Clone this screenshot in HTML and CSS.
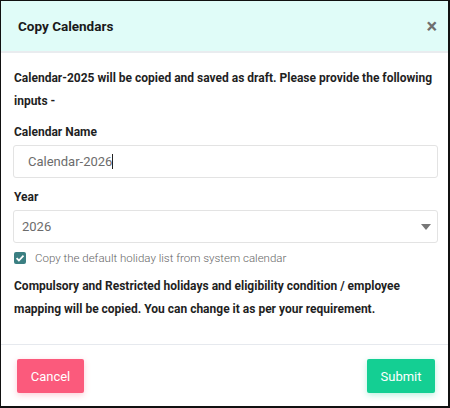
FILE: index.html
```html
<!DOCTYPE html>
<html>
<head>
<meta charset="utf-8">
<link rel="stylesheet" href="styles.css">
</head>
<body>
<div class="modal">
  <div class="modal-header">
    <h1 class="modal-title">Copy Calendars</h1>
    <span class="close">&times;</span>
  </div>
  <div class="modal-body">
    <p class="note">Calendar-2025 will be copied and saved as draft. Please provide the following inputs -</p>
    <label class="field-label">Calendar Name</label>
    <div class="input">Calendar-2026<span class="caret"></span></div>
    <label class="field-label">Year</label>
    <div class="select">
      <span>2026</span>
      <svg class="arrow" width="10" height="6" viewBox="0 0 10 6"><path d="M0 0h10L5 6z" fill="#777"/></svg>
    </div>
    <div class="check-row">
      <span class="checkbox"><svg width="12" height="12" viewBox="0 0 12 12"><path d="M2.6 6.2l2.3 2.3 4.6-4.8" fill="none" stroke="#fff" stroke-width="1.8"/></svg></span>
      <span class="check-text">Copy the default holiday list from system calendar</span>
    </div>
    <p class="note">Compulsory and Restricted holidays and eligibility condition / employee mapping will be copied. You can change it as per your requirement.</p>
  </div>
  <div class="modal-footer">
    <button class="btn btn-cancel">Cancel</button>
    <button class="btn btn-submit">Submit</button>
  </div>
</div>
</body>
</html>
```
FILE: styles.css
```css
html, body {
  margin: 0;
  padding: 0;
  background: #fff;
}
body {
  font-family: Roboto, "Liberation Sans", sans-serif;
  color: #212121;
}
.modal {
  width: 447px;
  height: 405px;
  border-top: 1px solid #111;
  border-left: 1px solid #111;
  border-right: 2px solid #111;
  border-bottom: 2px solid #111;
  display: flex;
  flex-direction: column;
  background: #fff;
}
.modal-header {
  height: 50px;
  flex-shrink: 0;
  background: #e0fcf8;
  border-bottom: 2px solid #e9ecef;
  display: flex;
  align-items: center;
  justify-content: space-between;
  padding: 0 11px 0 17px;
}
.modal-title {
  margin: 0;
  font-size: 13.5px;
  font-weight: 700;
  color: #1a1a1a;
}
.close {
  font-size: 20px;
  font-weight: 700;
  color: #6f6f6f;
  line-height: 1;
  margin-top: -1px;
}
.modal-body {
  flex: 1;
  padding: 14px 10px 0 12px;
}
.note {
  margin: 0 0 0 1px;
  font-size: 12px;
  font-weight: 700;
  line-height: 23px;
  color: #1f1f1f;
}
.field-label {
  display: block;
  font-size: 12px;
  line-height: 16px;
  font-weight: 700;
  margin-top: 11px;
  margin-bottom: 5px;
  margin-left: 1px;
  color: #1f1f1f;
}
.input, .select {
  height: 31px;
  border: 1px solid #e3e3e3;
  border-radius: 3px;
  display: flex;
  align-items: center;
  font-size: 13px;
  color: #6c6c6c;
}
.input {
  padding-left: 14px;
}
.caret {
  display: inline-block;
  width: 1px;
  height: 15px;
  background: #222;
}
.select {
  padding-left: 8px;
  padding-right: 6px;
  justify-content: space-between;
}
.arrow {
  display: block;
  margin-top: 1px;
}
.check-row {
  display: flex;
  align-items: center;
  height: 16px;
  margin-top: 7px;
  margin-bottom: 9px;
  margin-left: 1px;
}
.checkbox {
  width: 12px;
  height: 12px;
  border-radius: 2px;
  background: #3b7f82;
  display: inline-flex;
}
.check-text {
  font-size: 11.5px;
  font-weight: 300;
  color: #666;
  margin-left: 9px;
}
.modal-footer {
  height: 61px;
  flex-shrink: 0;
  border-top: 1px solid #e6e9ee;
  display: flex;
  align-items: center;
  justify-content: space-between;
  padding: 0 13px 0 16px;
}
.btn {
  border: none;
  border-radius: 2px;
  height: 34px;
  font-family: Roboto, "Liberation Sans", sans-serif;
  font-size: 13px;
  color: #fff;
  padding: 0;
  margin-top: 1px;
}
.btn-cancel {
  width: 67px;
  background: #fb5a7c;
  box-shadow: 0 2px 6px rgba(251, 90, 124, 0.3);
}
.btn-submit {
  width: 68px;
  background: #14cf93;
  box-shadow: 0 2px 6px rgba(20, 207, 147, 0.3);
}
```
